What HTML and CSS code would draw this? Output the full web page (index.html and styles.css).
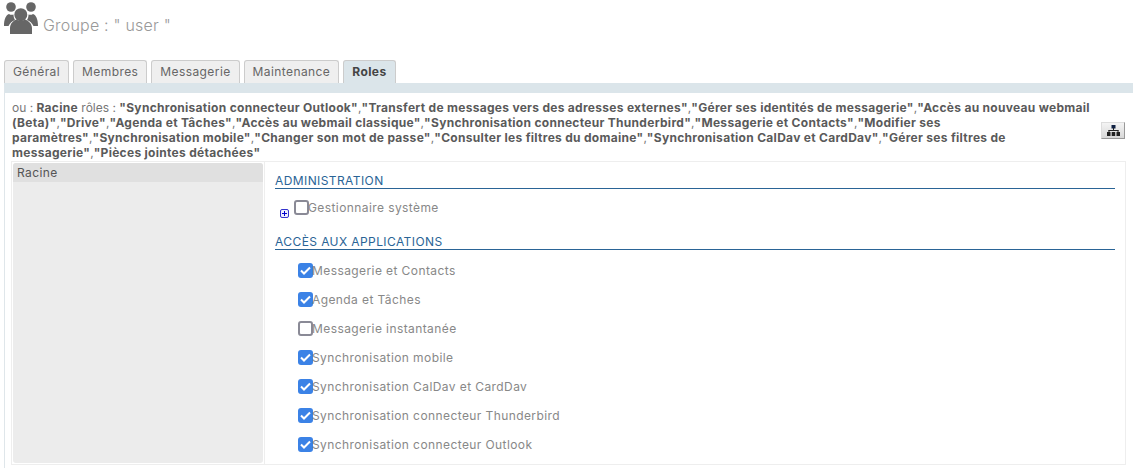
FILE: index.html
```html
<!DOCTYPE html>
<html lang="fr">
<head>
<meta charset="utf-8">
<title>Groupe</title>
<link rel="stylesheet" href="styles.css">
</head>
<body>
<header class="head">
  <svg class="head-icon" width="35" height="33" viewBox="0 0 35 33"><g fill="#666"><circle cx="7" cy="5" r="4.8"/><circle cx="27" cy="5" r="4.8"/><circle cx="16.800" cy="12.700" r="6.500"/><path d="M0 24c0-7 2-11 5-12 1.500 1 3 1 4.500.5 0 2 .5 4 1.500 5.500-3 1-5 3-6.500 6z"/><path d="M34 24c0-7-2-11-5-12-1.500 1-3 1-4.500.5 0 2-.5 4-1.500 5.500 3 1 5 3 6.500 6z"/><path d="M6 32v-6c0-4.500 3.500-7.500 6.500-8.500 2.500 1.800 6 1.800 8.500 0 3 1 7 4 7 8.500v6z"/></g></svg>
  <h1 class="title">Groupe : " user "</h1>
</header>
<nav class="tabs">
  <span class="tab">Général</span>
  <span class="tab">Membres</span>
  <span class="tab">Messagerie</span>
  <span class="tab">Maintenance</span>
  <span class="tab active">Roles</span>
</nav>
<main class="panel">
  <div class="summary">
    <p class="summary-text">ou : <b>Racine</b> rôles : <b>"Synchronisation connecteur Outlook"</b>,<b>"Transfert de messages vers des adresses externes"</b>,<b>"Gérer ses identités de messagerie"</b>,<b>"Accès au nouveau webmail (Beta)"</b>,<b>"Drive"</b>,<b>"Agenda et Tâches"</b>,<b>"Accès au webmail classique"</b>,<b>"Synchronisation connecteur Thunderbird"</b>,<b>"Messagerie et Contacts"</b>,<b>"Modifier ses paramètres"</b>,<b>"Synchronisation mobile"</b>,<b>"Changer son mot de passe"</b>,<b>"Consulter les filtres du domaine"</b>,<b>"Synchronisation CalDav et CardDav"</b>,<b>"Gérer ses filtres de messagerie"</b>,<b>"Pièces jointes détachées"</b></p>
    <button class="tree-btn" type="button" aria-label="Arborescence">
      <svg width="13" height="11" viewBox="0 0 13 11"><g fill="#222"><rect x="4.500" y="0" width="4" height="3.500" fill="#124"/><rect x="6" y="3" width="1" height="3"/><rect x="1.500" y="5" width="10" height="1"/><rect x="1.500" y="5" width="1" height="2"/><rect x="10.500" y="5" width="1" height="2"/><rect x="0" y="7" width="3.500" height="4"/><rect x="4.700" y="7" width="3.500" height="4"/><rect x="9.500" y="7" width="3.500" height="4"/></g></svg>
    </button>
  </div>
  <div class="split">
    <aside class="side"><div class="side-row">Racine</div></aside>
    <section class="content">
      <h2 class="section">ADMINISTRATION</h2>
      <div class="admin-row">
        <svg class="plus" width="9" height="9" viewBox="0 0 9 9"><rect x=".5" y=".5" width="8" height="8" rx="1.500" fill="#eef" stroke="#33c"/><path d="M2 4.500h5M4.500 2v5" stroke="#00c" fill="none"/></svg>
        <label class="check-row"><span class="box"></span>Gestionnaire système</label>
      </div>
      <h2 class="section second">ACCÈS AUX APPLICATIONS</h2>
      <ul class="apps">
        <li><label class="check-row"><span class="box on"><svg width="11" height="9" viewBox="0 0 11 9"><path d="M1 4.500l3 3 6-6" fill="none" stroke="#fff" stroke-width="2"/></svg></span>Messagerie et Contacts</label></li>
        <li><label class="check-row"><span class="box on"><svg width="11" height="9" viewBox="0 0 11 9"><path d="M1 4.500l3 3 6-6" fill="none" stroke="#fff" stroke-width="2"/></svg></span>Agenda et Tâches</label></li>
        <li><label class="check-row"><span class="box"></span>Messagerie instantanée</label></li>
        <li><label class="check-row"><span class="box on"><svg width="11" height="9" viewBox="0 0 11 9"><path d="M1 4.500l3 3 6-6" fill="none" stroke="#fff" stroke-width="2"/></svg></span>Synchronisation mobile</label></li>
        <li><label class="check-row"><span class="box on"><svg width="11" height="9" viewBox="0 0 11 9"><path d="M1 4.500l3 3 6-6" fill="none" stroke="#fff" stroke-width="2"/></svg></span>Synchronisation CalDav et CardDav</label></li>
        <li><label class="check-row"><span class="box on"><svg width="11" height="9" viewBox="0 0 11 9"><path d="M1 4.500l3 3 6-6" fill="none" stroke="#fff" stroke-width="2"/></svg></span>Synchronisation connecteur Thunderbird</label></li>
        <li><label class="check-row"><span class="box on"><svg width="11" height="9" viewBox="0 0 11 9"><path d="M1 4.500l3 3 6-6" fill="none" stroke="#fff" stroke-width="2"/></svg></span>Synchronisation connecteur Outlook</label></li>
      </ul>
    </section>
  </div>
</main>
</body>
</html>
```
FILE: styles.css
```css
* { box-sizing: border-box; }
html, body { margin: 0; padding: 0; height: 100%; overflow: hidden; }
body { background: #fff; color: #666; font-family: Inter, "Open Sans", sans-serif; font-size: 12px; }
.head { display: flex; align-items: flex-start; height: 60px; padding: 2px 0 0 4px; }
.head-icon { flex: none; }
.title { margin: 13px 0 0 4px; font-size: 16px; font-weight: 300; line-height: 20px; color: #999; letter-spacing: .2px; }
.tabs { display: flex; gap: 4px; height: 23px; padding-left: 4px; }
.tab { height: 23px; padding: 0 8px; line-height: 22px; background: #efefef; border: 1px solid #ccc; border-bottom: 0; border-radius: 3px 3px 0 0; color: #666; letter-spacing: .41px; }
.tab.active { background: #dbe5ea; border-color: #ccc; color: #444; font-weight: 700; }
.panel { margin-left: 4px; border-left: 1px solid #dfe6ea; border-top: 10px solid #dbe5ea; height: 385px; padding: 7px 0 0 7px; }
.summary { position: relative; width: 1114px; height: 61px; line-height: 15px; }
.summary-text { margin: 0; width: 1086px; color: #777; }
.summary-text b { color: #5a5a5a; font-weight: 700; letter-spacing: .29px; }
.tree-btn { position: absolute; left: 1089px; top: 22px; width: 24px; height: 17px; padding: 0; display: flex; align-items: center; justify-content: center; background: linear-gradient(#f4f4f4, #d8d8d8); border: 1px solid; border-color: #ddd #999 #999 #ddd; }
.split { display: flex; width: 1115px; height: 304px; margin-left: -1px; border: 1px solid #eee; }
.side { width: 250px; margin: 1px 0 1px 1px; background: #ececec; border-radius: 3px; flex: none; }
.side-row { height: 19px; padding-left: 4px; line-height: 19px; background: #e0e0e0; border-radius: 3px 3px 0 0; color: #555; letter-spacing: .41px; }
.content { flex: 1; margin-left: 1px; border-left: 1px solid #eee; padding: 12px 10px 0 10px; }
.section { margin: 0; height: 15px; border-bottom: 1px solid #2a6496; font-size: 12px; font-weight: 400; line-height: 14px; color: #2a6496; letter-spacing: .41px; }
.second { margin-top: 8px; }
.admin-row { display: flex; align-items: flex-start; padding: 11px 0 0 5px; height: 38px; }
.plus { margin-top: 9px; margin-right: 5px; flex: none; }
.check-row { display: flex; align-items: center; height: 15px; color: #888; letter-spacing: .41px; }
.box { display: flex; align-items: center; justify-content: center; flex: none; width: 15px; height: 15px; margin-right: -1px; border: 2px solid #8a8a96; border-radius: 3px; background: #fff; }
.box.on { background: #3b82e6; border: 0; }
.apps { list-style: none; margin: 13px 0 0; padding: 0 0 0 23px; display: flex; flex-direction: column; gap: 14px; }
```
